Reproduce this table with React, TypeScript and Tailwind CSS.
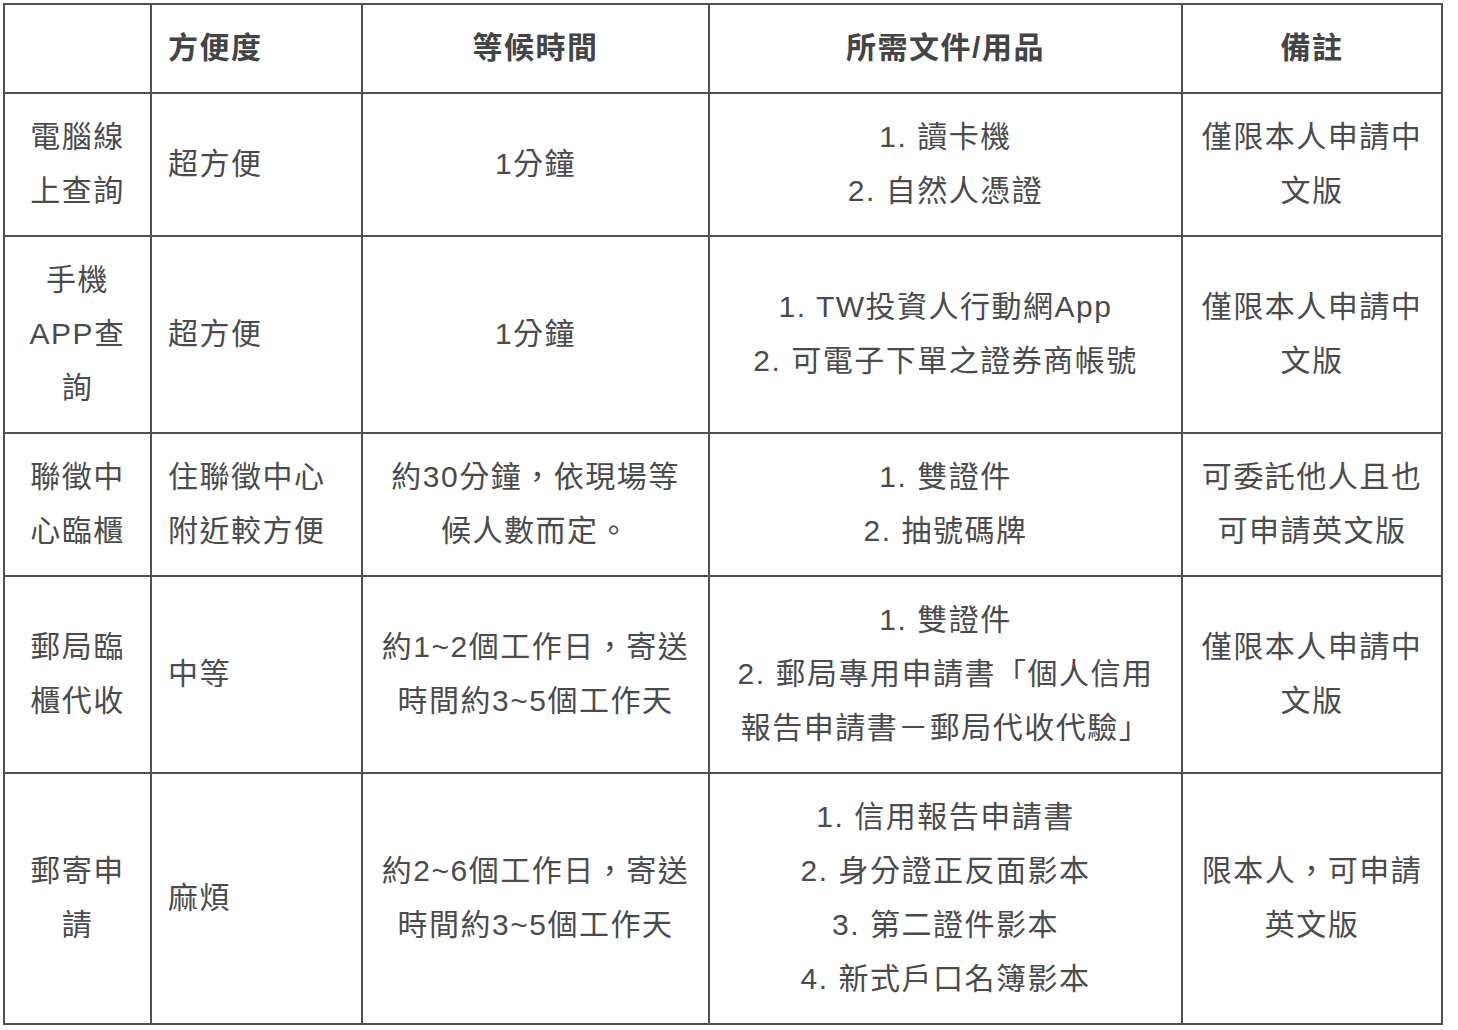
import React from 'react';

type Cell = { lines: string[]; align: 'left' | 'center' };

const header: { text: string; align: 'left' | 'center' }[] = [
  { text: '', align: 'center' },
  { text: '方便度', align: 'left' },
  { text: '等候時間', align: 'center' },
  { text: '所需文件/用品', align: 'center' },
  { text: '備註', align: 'center' },
];

const rows: string[][][] = [
  [
    ['電腦線', '上查詢'],
    ['超方便'],
    ['1分鐘'],
    ['1. 讀卡機', '2. 自然人憑證'],
    ['僅限本人申請中', '文版'],
  ],
  [
    ['手機', 'APP查', '詢'],
    ['超方便'],
    ['1分鐘'],
    ['1. TW投資人行動網App', '2. 可電子下單之證券商帳號'],
    ['僅限本人申請中', '文版'],
  ],
  [
    ['聯徵中', '心臨櫃'],
    ['住聯徵中心', '附近較方便'],
    ['約30分鐘，依現場等', '候人數而定。'],
    ['1. 雙證件', '2. 抽號碼牌'],
    ['可委託他人且也', '可申請英文版'],
  ],
  [
    ['郵局臨', '櫃代收'],
    ['中等'],
    ['約1~2個工作日，寄送', '時間約3~5個工作天'],
    ['1. 雙證件', '2. 郵局專用申請書「個人信用', '報告申請書－郵局代收代驗」'],
    ['僅限本人申請中', '文版'],
  ],
  [
    ['郵寄申', '請'],
    ['麻煩'],
    ['約2~6個工作日，寄送', '時間約3~5個工作天'],
    ['1. 信用報告申請書', '2. 身分證正反面影本', '3. 第二證件影本', '4. 新式戶口名簿影本'],
    ['限本人，可申請', '英文版'],
  ],
];

const aligns: ('left' | 'center')[] = ['center', 'left', 'center', 'center', 'center'];
const widths = [147, 211, 347, 473, 260];

function CellBody({ cell }: { cell: Cell }) {
  return (
    <div className={cell.align === 'left' ? 'text-left' : 'text-center'}>
      {cell.lines.map((l, i) => (
        <div key={i} className="whitespace-nowrap">
          {l}
        </div>
      ))}
    </div>
  );
}

export default function App() {
  return (
    <div className="bg-white min-h-screen p-[3px]">
      <table
        className="table-fixed border-collapse w-[1438px] text-[30px] leading-[54px] tracking-[1.5px] text-[#4b4b4b]"
        style={{ fontFamily: '"Liberation Sans", "Noto Sans CJK TC", sans-serif' }}
      >
        <colgroup>
          {widths.map((w, i) => (
            <col key={i} style={{ width: w }} />
          ))}
        </colgroup>
        <thead>
          <tr>
            {header.map((h, i) => (
              <th
                key={i}
                className={`border-2 border-[#4f4f54] px-[16px] pt-[16px] pb-[17px] align-middle font-bold text-[#444] ${
                  h.align === 'left' ? 'text-left' : 'text-center'
                }`}
              >
                {h.text}
              </th>
            ))}
          </tr>
        </thead>
        <tbody>
          {rows.map((r, ri) => (
            <tr key={ri}>
              {r.map((c, ci) => (
                <td key={ci} className="border-2 border-[#4f4f54] px-[16px] pt-[16px] pb-[17px] align-middle">
                  <CellBody cell={{ lines: c, align: aligns[ci] }} />
                </td>
              ))}
            </tr>
          ))}
        </tbody>
      </table>
    </div>
  );
}
